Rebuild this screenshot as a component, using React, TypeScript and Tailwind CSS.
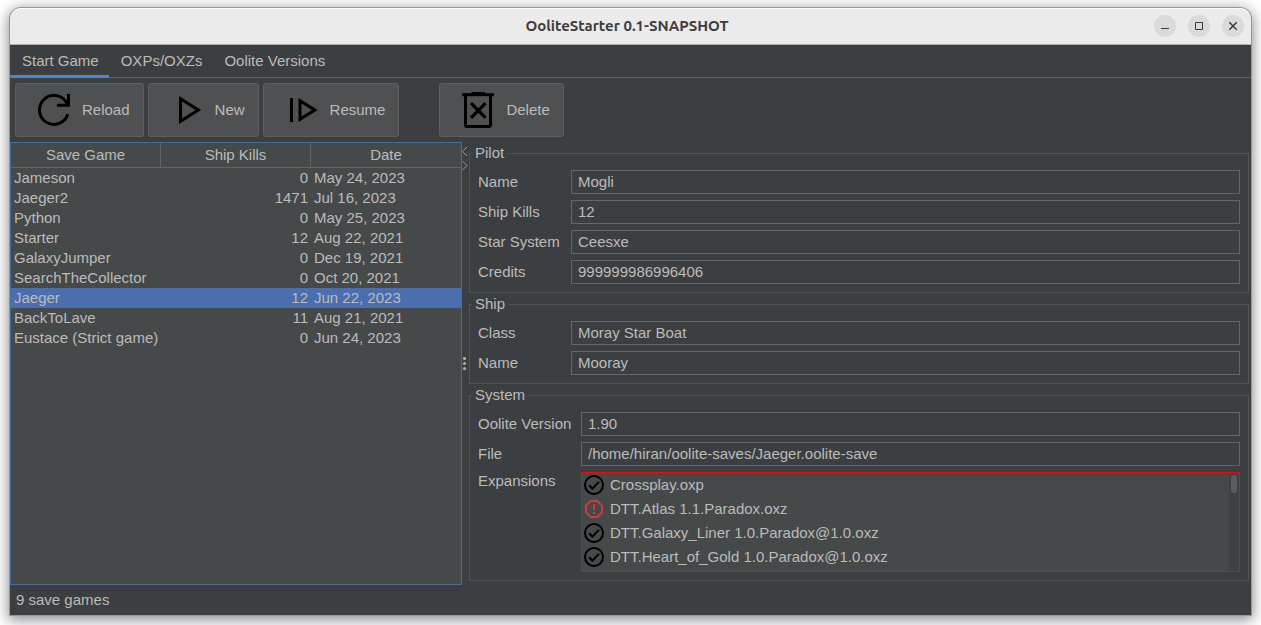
import React from "react";

type SaveGame = { name: string; kills: number; date: string };

const saves: SaveGame[] = [
  { name: "Jameson", kills: 0, date: "May 24, 2023" },
  { name: "Jaeger2", kills: 1471, date: "Jul 16, 2023" },
  { name: "Python", kills: 0, date: "May 25, 2023" },
  { name: "Starter", kills: 12, date: "Aug 22, 2021" },
  { name: "GalaxyJumper", kills: 0, date: "Dec 19, 2021" },
  { name: "SearchTheCollector", kills: 0, date: "Oct 20, 2021" },
  { name: "Jaeger", kills: 12, date: "Jun 22, 2023" },
  { name: "BackToLave", kills: 11, date: "Aug 21, 2021" },
  { name: "Eustace (Strict game)", kills: 0, date: "Jun 24, 2023" },
];

const expansions = [
  { name: "Crossplay.oxp", ok: true },
  { name: "DTT.Atlas 1.1.Paradox.oxz", ok: false },
  { name: "DTT.Galaxy_Liner 1.0.Paradox@1.0.oxz", ok: true },
  { name: "DTT.Heart_of_Gold 1.0.Paradox@1.0.oxz", ok: true },
];

function ReloadIcon() {
  return (
    <svg className="size-10" viewBox="0 0 40 40" fill="none" stroke="#000" strokeWidth="3">
      <path d="M33.8 24.3A14.5 14.5 0 1 1 33.4 14.4" />
      <path d="M34.5 4V15.3H23" />
    </svg>
  );
}

function PlayIcon() {
  return (
    <svg className="size-10" viewBox="0 0 40 40" fill="#000" fillRule="evenodd">
      <path d="M12 6V34L34.2 20ZM15 11.4L28.6 20L15 28.6Z" />
    </svg>
  );
}

function ResumeIcon() {
  return (
    <svg className="size-10" viewBox="0 0 40 40" fill="#000" fillRule="evenodd">
      <path d="M8 8H11V32H8Z" />
      <path d="M16.5 8V32L35.7 20ZM19.5 13.4L30 20L19.5 26.6Z" />
    </svg>
  );
}

function DeleteIcon() {
  return (
    <svg className="size-10" viewBox="0 0 40 40" fill="none" stroke="#000" strokeWidth="3">
      <path d="M4 4.7H36" />
      <path d="M13.5 3.2H27" strokeWidth="2.4" />
      <path d="M7.5 5V35Q7.5 36.5 9 36.5H31Q32.5 36.5 32.5 35V5" />
      <path d="M13 13.2L27.6 27.8M27.6 13.2L13 27.8" strokeWidth="3.2" />
    </svg>
  );
}

function CheckIcon() {
  return (
    <svg className="size-6 shrink-0" viewBox="0 0 24 24" fill="none" stroke="#000" strokeWidth="2">
      <circle cx="12" cy="12" r="9" />
      <path d="M7 12.1L10.4 15.5L17 8.9" />
    </svg>
  );
}

function AlertIcon() {
  return (
    <svg className="size-6 shrink-0" viewBox="0 0 24 24" fill="none" stroke="#cc3a3c" strokeWidth="2">
      <path d="M8.7 4H15.3L20 8.7V15.3L15.3 20H8.7L4 15.3V8.7Z" />
      <path d="M12 7V13M12 15V17" />
    </svg>
  );
}

function ToolButton({ icon, children }: { icon: React.ReactNode; children: React.ReactNode }) {
  return (
    <button
      type="button"
      className="flex h-[54px] items-center gap-2 rounded-[3px] border border-[#5e6060] bg-[#4e5052] pr-[13px] pl-[18px]"
    >
      {icon}
      <span>{children}</span>
    </button>
  );
}

function Group({ title, children }: { title: string; children: React.ReactNode }) {
  return (
    <fieldset className="min-w-0 border border-[#515557] px-[2px]">
      <legend className="h-[18px] px-[3px] leading-[18px]">{title}</legend>
      <div className="flex flex-col gap-[6px] py-2 pr-[6px] pl-[6px]">{children}</div>
    </fieldset>
  );
}

function Field({ id, label, value, wide }: { id: string; label: string; value: string; wide?: boolean }) {
  return (
    <div className="flex items-center">
      <label htmlFor={id} className={wide ? "w-[103px] shrink-0" : "w-[93px] shrink-0"}>
        {label}
      </label>
      <input
        id={id}
        readOnly
        defaultValue={value}
        className="h-6 min-w-0 flex-1 border border-[#646667] bg-transparent px-[6px] pb-[2px] outline-none"
      />
    </div>
  );
}

function WindowButton({ label, children }: { label: string; children: React.ReactNode }) {
  return (
    <button
      type="button"
      aria-label={label}
      className="flex size-[22px] items-center justify-center rounded-full bg-[#dadada]"
    >
      <svg className="size-[10px]" viewBox="0 0 10 10" fill="none" stroke="#3a3a3a">
        {children}
      </svg>
    </button>
  );
}

export default function App() {
  return (
    <div className="flex min-h-screen bg-white px-[10px] pt-2 pb-[10px] font-['Liberation_Sans',Arial,sans-serif] text-[15px] leading-5 text-[#bbbbbb]">
      <div className="flex min-w-0 flex-1 flex-col rounded-t-[11px] bg-[#3c3f41] shadow-[0_0_0_1px_#969696,0_3px_14px_2px_rgba(0,0,0,0.45)]">
        <header className="grid h-[37px] grid-cols-[1fr_auto_1fr] items-center rounded-t-[11px] border-b border-[#b0b0b0] bg-[#ebebeb] pr-[7px] shadow-[inset_0_1px_0_#fbfbfb]">
          <span />
          <h1 className="font-['Ubuntu','Noto_Sans',sans-serif] text-[15px] font-bold text-[#3d3d3d]">
            OoliteStarter 0.1-SNAPSHOT
          </h1>
          <div className="flex justify-end gap-3">
            <WindowButton label="Minimize">
              <path d="M1 7.5H9" />
            </WindowButton>
            <WindowButton label="Maximize">
              <path d="M1.5 1.5H8.5V8.5H1.5Z" />
            </WindowButton>
            <WindowButton label="Close">
              <path d="M1.3 1.3L8.7 8.7M8.7 1.3L1.3 8.7" strokeWidth="1.5" />
            </WindowButton>
          </div>
        </header>

        <nav className="flex h-[33px] shadow-[inset_0_-1px_0_#616365]">
          <a href="#start" className="border-b-[3px] border-[#4a88c7] pt-[6px] pr-[10px] pl-3">
            Start Game
          </a>
          <a href="#oxps" className="pt-[6px] pr-[10px] pl-3">
            OXPs/OXZs
          </a>
          <a href="#versions" className="pt-[6px] pr-[10px] pl-3">
            Oolite Versions
          </a>
        </nav>

        <div className="flex gap-1 p-[5px]">
          <ToolButton icon={<ReloadIcon />}>Reload</ToolButton>
          <ToolButton icon={<PlayIcon />}>New</ToolButton>
          <ToolButton icon={<ResumeIcon />}>Resume</ToolButton>
          <div className="w-8" />
          <ToolButton icon={<DeleteIcon />}>Delete</ToolButton>
        </div>

        <main className="flex flex-1">
          <div className="w-[452px] shrink-0 border border-[#466d94] bg-[#45494a]">
            <table className="w-full table-fixed border-separate border-spacing-0">
              <thead>
                <tr>
                  <th className="h-[25px] border-r border-b border-[#616365] p-0 font-normal">Save Game</th>
                  <th className="h-[25px] border-r border-b border-[#616365] p-0 font-normal">Ship Kills</th>
                  <th className="h-[25px] border-b border-[#616365] p-0 font-normal">Date</th>
                </tr>
              </thead>
              <tbody>
                {saves.map((s) => (
                  <tr key={s.name} className={s.name === "Jaeger" ? "bg-[#4b6eaf]" : ""}>
                    <td className="px-[3px] py-0 whitespace-nowrap">{s.name}</td>
                    <td className="px-[3px] py-0 text-right">{s.kills}</td>
                    <td className="px-[3px] py-0">{s.date}</td>
                  </tr>
                ))}
              </tbody>
            </table>
          </div>

          <div className="grid w-[7px] shrink-0">
            <svg
              className="h-8 w-[7px] self-start [grid-area:1/1]"
              viewBox="0 0 7 32"
              fill="none"
              stroke="#9a9d9e"
            >
              <path d="M5 5L0.5 9.5L5 14M0.5 19L5 23.5L0.5 28" />
            </svg>
            <svg className="h-[13px] w-[7px] self-center [grid-area:1/1]" viewBox="0 0 7 13" fill="#adadad">
              <circle cx="2.5" cy="1.5" r="1.6" />
              <circle cx="2.5" cy="6.5" r="1.6" />
              <circle cx="2.5" cy="11.5" r="1.6" />
            </svg>
          </div>

          <div className="flex min-w-0 flex-1 flex-col gap-[2px] pt-[2px] pr-[2px]">
            <Group title="Pilot">
              <Field id="pilot-name" label="Name" value="Mogli" />
              <Field id="pilot-kills" label="Ship Kills" value="12" />
              <Field id="pilot-system" label="Star System" value="Ceesxe" />
              <Field id="pilot-credits" label="Credits" value="999999986996406" />
            </Group>
            <Group title="Ship">
              <Field id="ship-class" label="Class" value="Moray Star Boat" />
              <Field id="ship-name" label="Name" value="Mooray" />
            </Group>
            <Group title="System">
              <Field id="sys-version" label="Oolite Version" value="1.90" wide />
              <Field id="sys-file" label="File" value="/home/hiran/oolite-saves/Jaeger.oolite-save" wide />
              <div className="flex items-start">
                <span id="expansions-label" className="w-[103px] shrink-0 leading-[18px]">
                  Expansions
                </span>
                <div className="flex h-[100px] min-w-0 flex-1 border border-[#f50808] bg-[#45494a]">
                  <ul aria-labelledby="expansions-label" className="min-w-0 flex-1 overflow-hidden">
                    {expansions.map((e) => (
                      <li key={e.name} className="flex h-6 items-center gap-1">
                        {e.ok ? <CheckIcon /> : <AlertIcon />}
                        <span>{e.name}</span>
                      </li>
                    ))}
                  </ul>
                  <div className="w-[10px] bg-[#3f4244] p-[2px]">
                    <div className="h-[18px] rounded-full bg-[#595d5f]" />
                  </div>
                </div>
              </div>
            </Group>
          </div>
        </main>

        <footer className="px-[6px] py-[5px]">9 save games</footer>
      </div>
    </div>
  );
}
